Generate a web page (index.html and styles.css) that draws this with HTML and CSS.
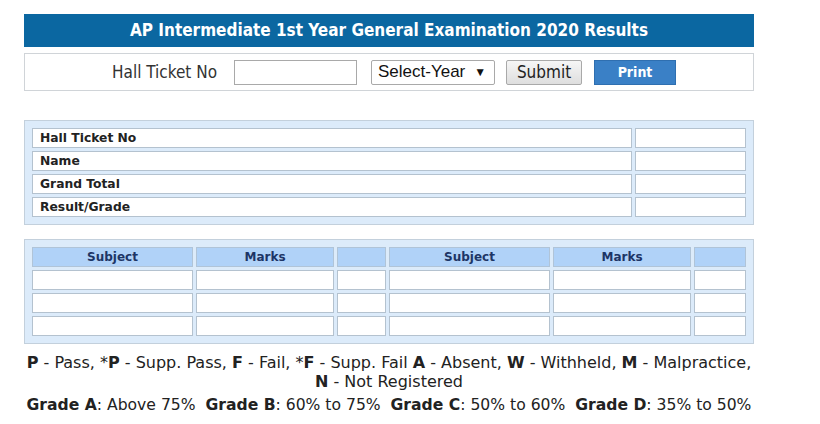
FILE: index.html
```html
<!DOCTYPE html>
<html lang="en">
<head>
<meta charset="utf-8">
<title>AP Intermediate 1st Year Results</title>
<link rel="stylesheet" href="styles.css">
</head>
<body>
<div class="page">
  <h1 class="title">AP Intermediate 1st Year General Examination 2020 Results</h1>
  <form class="search">
    <label class="lbl" for="ht">Hall Ticket No</label>
    <input id="ht" class="txt" type="text">
    <div class="select">Select-Year <span class="arrow">▼</span></div>
    <button class="btn submit" type="button">Submit</button>
    <button class="btn print" type="button">Print</button>
  </form>

  <div class="panel info">
    <div class="cell lab">Hall Ticket No</div><div class="cell"></div>
    <div class="cell lab">Name</div><div class="cell"></div>
    <div class="cell lab">Grand Total</div><div class="cell"></div>
    <div class="cell lab">Result/Grade</div><div class="cell"></div>
  </div>

  <div class="panel marks">
    <div class="cell head">Subject</div><div class="cell head">Marks</div><div class="cell head"></div>
    <div class="cell head">Subject</div><div class="cell head">Marks</div><div class="cell head"></div>
    <div class="cell"></div><div class="cell"></div><div class="cell"></div><div class="cell"></div><div class="cell"></div><div class="cell"></div>
    <div class="cell"></div><div class="cell"></div><div class="cell"></div><div class="cell"></div><div class="cell"></div><div class="cell"></div>
    <div class="cell"></div><div class="cell"></div><div class="cell"></div><div class="cell"></div><div class="cell"></div><div class="cell"></div>
  </div>

  <p class="legend"><b>P</b> - Pass, *<b>P</b> - Supp. Pass, <b>F</b> - Fail, *<b>F</b> - Supp. Fail <b>A</b> - Absent, <b>W</b> - Withheld, <b>M</b> - Malpractice,<br><b>N</b> - Not Registered</p>
  <p class="grades"><b>Grade A</b>: Above 75%&nbsp; <b>Grade B</b>: 60% to 75%&nbsp; <b>Grade C</b>: 50% to 60%&nbsp; <b>Grade D</b>: 35% to 50%</p>
</div>
</body>
</html>
```

FILE: styles.css
```css
* { box-sizing: border-box; }

body {
  margin: 0;
  background: #ffffff;
  font-family: "DejaVu Sans", Verdana, sans-serif;
  color: #222;
}

.page {
  width: 730px;
  margin-left: 24px;
  padding-top: 14px;
}

.title {
  margin: 0;
  height: 33px;
  line-height: 33px;
  background: #0b67a1;
  color: #fff;
  font-size: 17px;
  font-weight: bold;
  text-align: center;
  font-stretch: condensed;
}

.search {
  margin: 6px 0 0;
  height: 38px;
  border: 1px solid #d0d4d8;
  display: flex;
  align-items: center;
  justify-content: flex-start;
  padding-left: 87px;
}

.lbl {
  font-size: 17px;
  color: #333;
  font-stretch: condensed;
  margin-right: 17px;
}

.txt {
  width: 123px;
  height: 25px;
  border: 1px solid #a9a9a9;
  margin: 0 14px 0 0;
  padding: 0;
}

.select {
  width: 124px;
  height: 25px;
  border: 1px solid #a9a9a9;
  border-radius: 2px;
  font-family: "Liberation Sans", Arial, sans-serif;
  font-size: 17px;
  color: #111;
  display: flex;
  align-items: center;
  padding-left: 6px;
  gap: 9px;
  margin-right: 11px;
}

.arrow { font-size: 12px; }

.btn {
  height: 25px;
  padding: 0;
  cursor: pointer;
}

.submit {
  width: 76px;
  border: 1px solid #a9a9a9;
  border-radius: 2px;
  background: linear-gradient(#f6f6f6, #dedede);
  font-family: "DejaVu Sans", sans-serif;
  font-stretch: condensed;
  font-size: 17px;
  color: #222;
  margin-right: 12px;
}

.print {
  width: 82px;
  border: 1px solid #2f6fb0;
  background: #3a80c6;
  color: #fff;
  font-family: "DejaVu Sans", sans-serif;
  font-stretch: condensed;
  font-size: 14px;
  font-weight: bold;
}

.panel {
  border: 1px solid #c3d0dc;
  background: #dcebfa;
  padding: 7px;
  display: grid;
  gap: 3px;
}

.info {
  margin-top: 29px;
  grid-template-columns: 1fr 111px;
  grid-auto-rows: 20px;
}

.marks {
  margin-top: 14px;
  grid-template-columns: 161px 138px 49px 161px 138px 1fr;
  grid-auto-rows: 20px;
}

.cell {
  background: #fff;
  border: 1px solid #b4c2cf;
}

.lab {
  font-size: 12.3px;
  font-weight: bold;
  color: #222;
  padding-left: 7px;
  line-height: 18px;
}

.head {
  background: #b0d2f8;
  border-color: #b0c4d8;
  color: #1d3566;
  font-size: 12px;
  font-weight: bold;
  text-align: center;
  line-height: 18px;
}

.legend {
  margin: 9px 0 0;
  font-size: 16px;
  line-height: 19px;
  text-align: center;
  color: #222;
}

.grades {
  margin: 5px 0 0;
  font-size: 15.6px;
  line-height: 19px;
  text-align: center;
  color: #222;
  white-space: nowrap;
}
```
